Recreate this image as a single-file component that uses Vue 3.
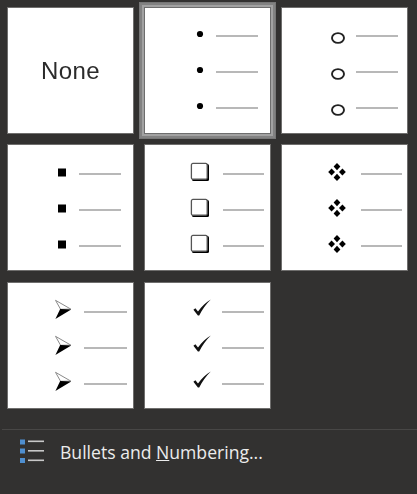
<template>
  <div class="bullet-menu">
    <div class="bullet-grid">
      <div class="cell cell-none"><span class="none-label">None</span></div>
      <div
        v-for="item in bullets"
        :key="item.name"
        class="cell"
        :class="[item.name, { selected: item.selected }]"
      >
        <div v-for="n in 3" :key="n" class="bullet-row">
          <span class="glyph">
            <svg width="24" height="24" viewBox="0 0 24 24">
              <circle v-if="item.name === 'dot'" cx="12" cy="12" r="3.1" fill="#000" />
              <ellipse v-else-if="item.name === 'ring'" cx="12" cy="12" rx="6" ry="4.9" fill="none" stroke="#222" stroke-width="1.9" />
              <rect v-else-if="item.name === 'square'" x="8" y="8" width="8" height="8" fill="#000" />
              <g v-else-if="item.name === 'box'">
                <rect x="4" y="4" width="17" height="17" rx="1.5" fill="#000" />
                <rect x="3.4" y="3.4" width="15.8" height="15.8" rx="1.5" fill="#fff" stroke="#555" stroke-width="1.3" />
              </g>
              <g v-else-if="item.name === 'diamond'" fill="#000">
                <path d="M12 3l3.4 3.6-3.4 3.6-3.4-3.6z" />
                <path d="M12 13.8l3.4 3.6-3.4 3.6-3.4-3.6z" />
                <path d="M6.6 8.4l3.4 3.6-3.4 3.6L3.2 12z" />
                <path d="M17.4 8.4l3.4 3.6-3.4 3.6L14 12z" />
              </g>
              <g v-else-if="item.name === 'arrow'">
                <path d="M4.5 2.8L19.8 11.6 9.6 11.8z" fill="#fff" stroke="#8a8a8a" stroke-width="1" stroke-linejoin="round" />
                <path d="M20.2 12L4.4 21.4 9.2 11.6z" fill="#000" />
              </g>
              <path v-else d="M3.4 13.8l2-1.6 2.6 3.2C11.8 10 16.2 6 20.8 3.4c-4.6 4.4-8.8 10-11.6 16.2H7.9z" fill="#111" />
            </svg>
          </span>
          <span class="line"></span>
        </div>
      </div>
    </div>
    <div class="menu-divider"></div>
    <div class="menu-item">
      <svg class="menu-icon" width="28" height="26" viewBox="0 0 28 26">
        <rect x="1" y="0.5" width="5" height="5" fill="#4f8fd0" />
        <rect x="1" y="9.5" width="5" height="5" fill="#4f8fd0" />
        <rect x="1" y="19" width="5" height="5" fill="#4f8fd0" />
        <rect x="9" y="1.5" width="16" height="1.6" fill="#c8c8c8" />
        <rect x="9" y="11" width="16" height="1.6" fill="#c8c8c8" />
        <rect x="9" y="20.5" width="16" height="1.6" fill="#c8c8c8" />
      </svg>
      <span class="menu-label">Bullets and <u>N</u>umbering...</span>
    </div>
  </div>
</template>

<script setup>
const bullets = [
  { name: 'dot', selected: true },
  { name: 'ring' },
  { name: 'square' },
  { name: 'box' },
  { name: 'diamond' },
  { name: 'arrow' },
  { name: 'check' }
]
</script>

<style>
html,
body {
  margin: 0;
  background: #323130;
}
</style>

<style scoped>
.bullet-menu {
  width: 417px;
  height: 494px;
  background: #323130;
  font-family: "Open Sans", "Noto Sans", sans-serif;
  overflow: hidden;
}

.bullet-grid {
  display: grid;
  grid-template-columns: repeat(3, 125px);
  grid-template-rows: 125px 126px 125px;
  gap: 12px;
  padding: 8px 0 0 8px;
}

.cell {
  --glyph-x: 55px;
  --glyph-y: -2px;
  --line-x: 72px;
  --line-w: 41px;
  height: 125px;
  box-sizing: border-box;
  background: #fff;
  display: flex;
  flex-direction: column;
  padding-top: 11px;
  box-shadow: 0 0 0 1px #6f6e6d;
}

.cell.selected {
  box-shadow: 0 0 0 1px #6e6e6e, 0 0 0 3px #a2a2a2, 0 0 0 5px #828282, 0 0 0 6px #767676;
}

.cell-none {
  align-items: center;
  justify-content: center;
  padding-top: 0;
}

.none-label {
  font-family: "Liberation Sans", Arial, sans-serif;
  font-size: 24px;
  letter-spacing: 0.4px;
  color: #2b2b2b;
  filter: blur(0.3px);
}

.dot { --line-x: 70.5px; --line-w: 42px; padding-top: 10px; }
.ring { --glyph-x: 56px; --glyph-y: 2px; --line-x: 74px; --line-w: 42px; padding-top: 10px; }
.square { --glyph-x: 53.5px; --glyph-y: -1.5px; --line-x: 71px; --line-w: 42px; }
.box { --glyph-x: 55px; --glyph-y: -2px; --line-x: 78px; --line-w: 41px; }
.diamond { --glyph-x: 55px; --glyph-y: -2px; --line-x: 78.5px; --line-w: 41px; }
.arrow { --glyph-x: 54.5px; --glyph-y: -2.5px; --line-x: 76px; --line-w: 42.5px; }
.check { --glyph-x: 56.5px; --glyph-y: -4px; --line-x: 76.5px; --line-w: 42.5px; }

.bullet-row {
  display: flex;
  align-items: center;
  height: 36px;
  padding-left: calc(var(--glyph-x) - 12px);
}

.glyph {
  width: 24px;
  height: 24px;
  flex: none;
  transform: translateY(var(--glyph-y));
}

.glyph svg {
  display: block;
  filter: blur(0.35px);
}

.line {
  flex: none;
  width: var(--line-w);
  height: 2px;
  margin-left: calc(var(--line-x) - var(--glyph-x) - 12px);
  background: #b8b8b8;
  filter: blur(0.3px);
}

.menu-divider {
  height: 1px;
  margin: 21px 0 0 2px;
  background: #484746;
}

.menu-item {
  display: flex;
  align-items: center;
  height: 44px;
  padding-left: 19px;
}

.menu-icon {
  flex: none;
}

.menu-label {
  margin-left: 13px;
  font-size: 17.6px;
  color: #ececec;
  white-space: nowrap;
}
</style>
